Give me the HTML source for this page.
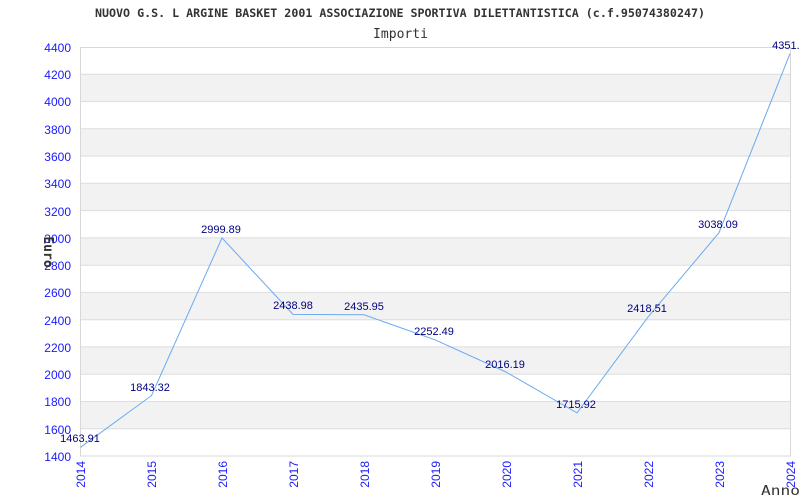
<!DOCTYPE html>
<html><head><meta charset="utf-8"><style>
html,body{margin:0;padding:0;background:#fff;width:800px;height:500px;overflow:hidden}
</style></head><body>
<svg width="800" height="500" xmlns="http://www.w3.org/2000/svg" font-family="Liberation Sans, sans-serif">
<rect width="800" height="500" fill="#fff"/>
<text x="95" y="17" textLength="610" lengthAdjust="spacingAndGlyphs" font-family="DejaVu Sans Mono, Liberation Mono, monospace" font-size="11.5" font-weight="bold" fill="#333">NUOVO G.S. L ARGINE BASKET 2001 ASSOCIAZIONE SPORTIVA DILETTANTISTICA (c.f.95074380247)</text>
<text x="373" y="38" textLength="55" lengthAdjust="spacingAndGlyphs" font-family="DejaVu Sans Mono, Liberation Mono, monospace" font-size="13" fill="#333">Importi</text>
<g fill="#f2f2f2">
<rect x="80.5" y="74.3" width="710" height="27.3"/>
<rect x="80.5" y="128.8" width="710" height="27.3"/>
<rect x="80.5" y="183.3" width="710" height="27.3"/>
<rect x="80.5" y="237.9" width="710" height="27.3"/>
<rect x="80.5" y="292.4" width="710" height="27.3"/>
<rect x="80.5" y="346.9" width="710" height="27.3"/>
<rect x="80.5" y="401.5" width="710" height="27.3"/>
</g>
<g stroke="#ddd" stroke-width="1">
<line x1="80.5" y1="74.3" x2="790.5" y2="74.3"/><line x1="80.5" y1="101.6" x2="790.5" y2="101.6"/>
<line x1="80.5" y1="128.8" x2="790.5" y2="128.8"/><line x1="80.5" y1="156.1" x2="790.5" y2="156.1"/>
<line x1="80.5" y1="183.3" x2="790.5" y2="183.3"/><line x1="80.5" y1="210.6" x2="790.5" y2="210.6"/>
<line x1="80.5" y1="237.9" x2="790.5" y2="237.9"/><line x1="80.5" y1="265.2" x2="790.5" y2="265.2"/>
<line x1="80.5" y1="292.4" x2="790.5" y2="292.4"/><line x1="80.5" y1="319.7" x2="790.5" y2="319.7"/>
<line x1="80.5" y1="346.9" x2="790.5" y2="346.9"/><line x1="80.5" y1="374.2" x2="790.5" y2="374.2"/>
<line x1="80.5" y1="401.5" x2="790.5" y2="401.5"/><line x1="80.5" y1="428.8" x2="790.5" y2="428.8"/>
</g>
<rect x="80.5" y="47.5" width="710" height="408.5" fill="none" stroke="#d8d8d8"/>
<g fill="#1a1aff" font-size="12" text-anchor="end">
<text x="71" y="52">4400</text><text x="71" y="79">4200</text><text x="71" y="106">4000</text>
<text x="71" y="134">3800</text><text x="71" y="161">3600</text><text x="71" y="188">3400</text>
<text x="71" y="216">3200</text><text x="71" y="243">3000</text><text x="71" y="270">2800</text>
<text x="71" y="297">2600</text><text x="71" y="325">2400</text><text x="71" y="352">2200</text>
<text x="71" y="379">2000</text><text x="71" y="406">1800</text><text x="71" y="434">1600</text>
<text x="71" y="461">1400</text>
</g>
<g fill="#1a1aff" font-size="12" text-anchor="end">
<text transform="translate(85,461) rotate(-90)">2014</text>
<text transform="translate(156,461) rotate(-90)">2015</text>
<text transform="translate(227,461) rotate(-90)">2016</text>
<text transform="translate(298,461) rotate(-90)">2017</text>
<text transform="translate(369,461) rotate(-90)">2018</text>
<text transform="translate(440,461) rotate(-90)">2019</text>
<text transform="translate(511,461) rotate(-90)">2020</text>
<text transform="translate(582,461) rotate(-90)">2021</text>
<text transform="translate(653,461) rotate(-90)">2022</text>
<text transform="translate(724,461) rotate(-90)">2023</text>
<text transform="translate(795,461) rotate(-90)">2024</text>
</g>
<text transform="translate(44,252) rotate(90)" text-anchor="middle" font-family="DejaVu Sans Mono, Liberation Mono, monospace" font-size="13" font-weight="bold" fill="#333">Euro</text>
<text x="761" y="495" textLength="39" lengthAdjust="spacingAndGlyphs" font-family="DejaVu Sans Mono, Liberation Mono, monospace" font-size="13" fill="#333">Anno</text>
<polyline fill="none" stroke="#6aaaf0" stroke-width="1" points="80.5,447.3 151.5,395.6 222,237.9 293,314.4 364,314.8 435,339.8 506,372 577,412.9 648,317.1 719,232.7 790,53.6"/>
<g fill="#000080" font-size="11" text-anchor="middle">
<text x="80" y="442">1463.91</text>
<text x="150" y="391">1843.32</text>
<text x="221" y="233">2999.89</text>
<text x="293" y="309">2438.98</text>
<text x="364" y="310">2435.95</text>
<text x="434" y="335">2252.49</text>
<text x="505" y="368">2016.19</text>
<text x="576" y="408">1715.92</text>
<text x="647" y="312">2418.51</text>
<text x="718" y="228">3038.09</text>
<text x="789" y="49">4351.5</text>
</g>
</svg>
</body></html>
